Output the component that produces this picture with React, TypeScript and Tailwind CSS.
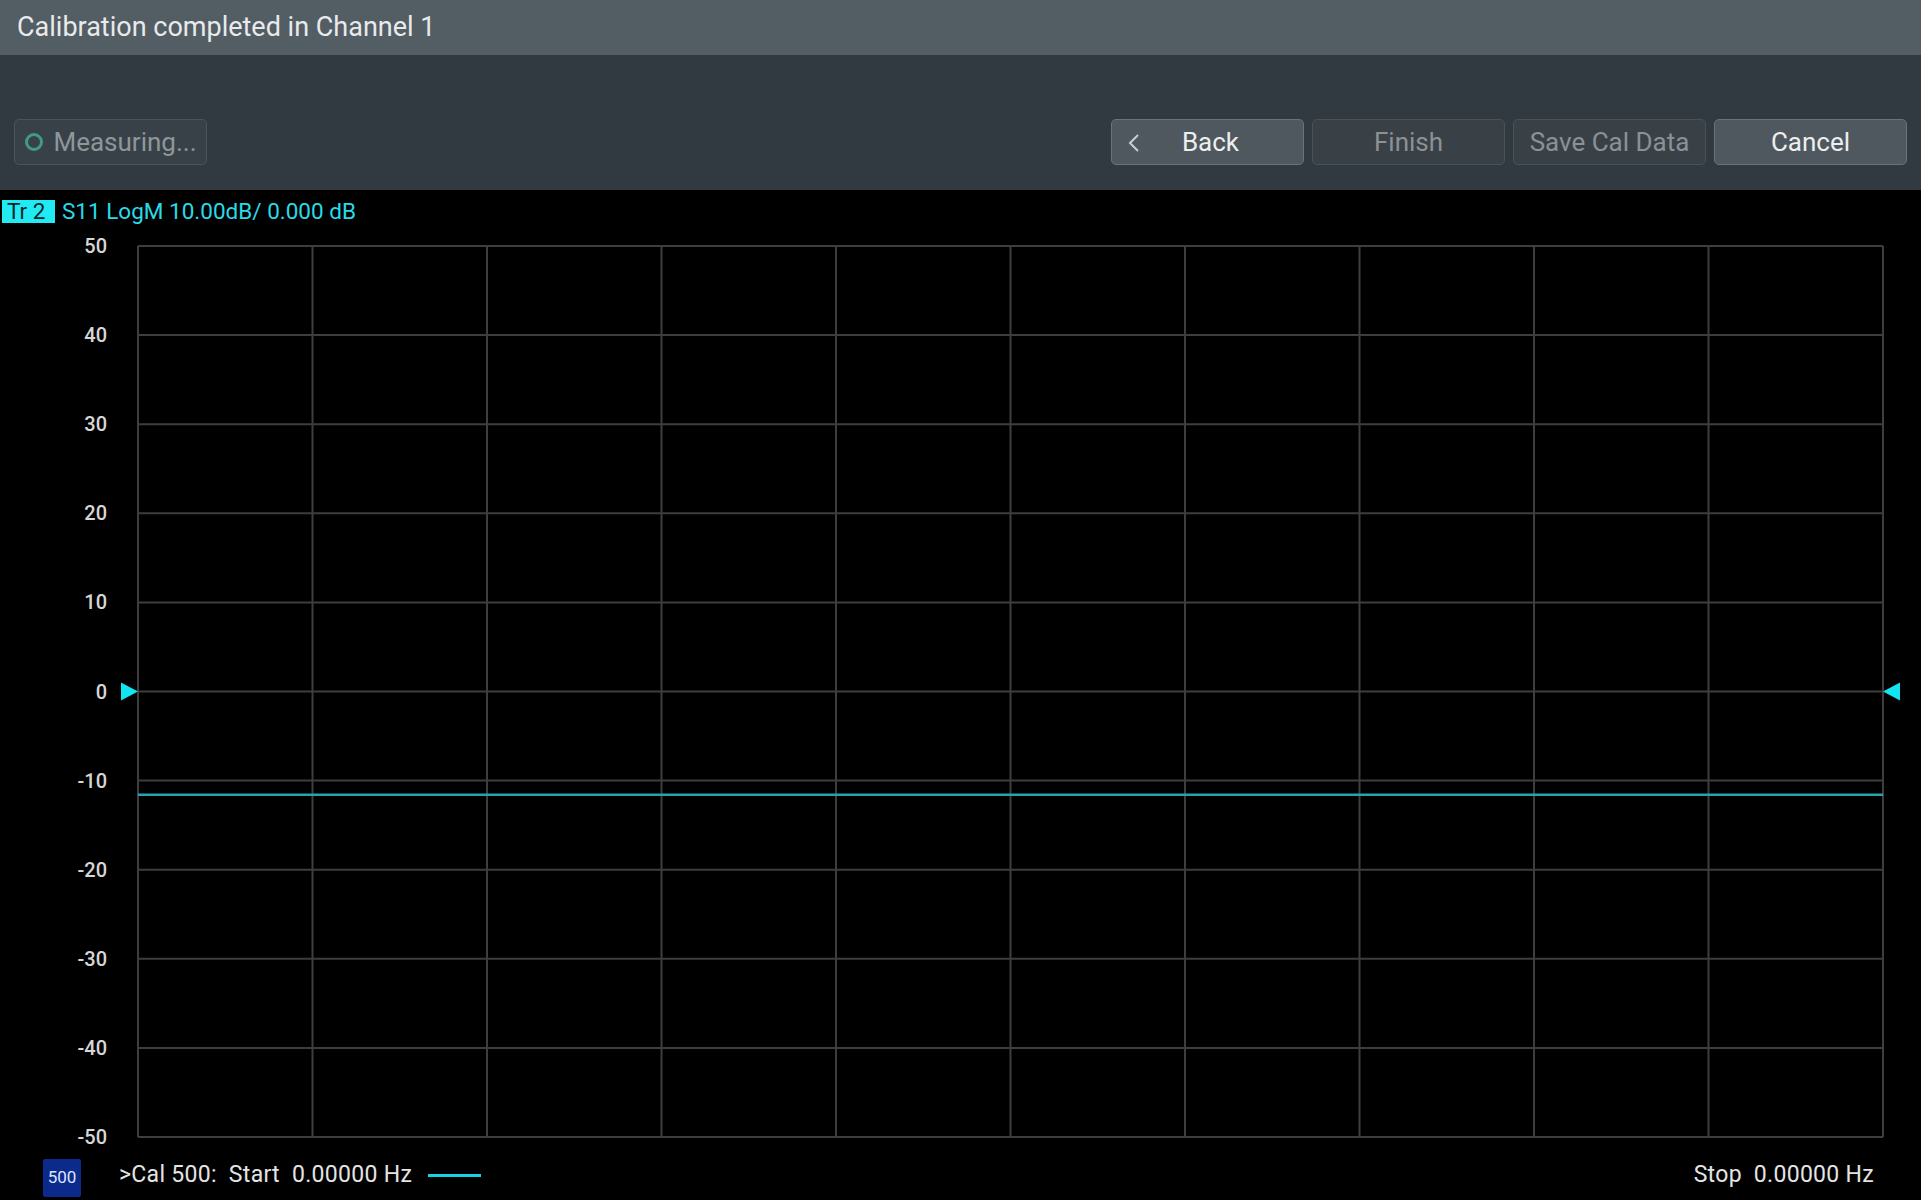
import React from "react";

const W = 1921;
const GX0 = 138;
const GX1 = 1883;
const GY0 = 16;
const GY1 = 907;
const LABELS = [50, 40, 30, 20, 10, 0, -10, -20, -30, -40, -50];

function Chart() {
  const dx = (GX1 - GX0) / 10;
  const dy = (GY1 - GY0) / 10;
  const zeroY = GY0 + 5 * dy;
  const traceY = zeroY + 1.16 * dy;

  return (
    <svg width={W} height={920} className="block">
      {/* grid */}
      {Array.from({ length: 11 }).map((_, i) => (
        <line key={"v" + i} x1={GX0 + i * dx} x2={GX0 + i * dx} y1={GY0} y2={GY1} stroke="#3e3e3e" strokeWidth={2} />
      ))}
      {Array.from({ length: 11 }).map((_, i) => (
        <line key={"h" + i} x1={GX0} x2={GX1} y1={GY0 + i * dy} y2={GY0 + i * dy} stroke="#3e3e3e" strokeWidth={2} />
      ))}

      {/* y axis labels */}
      {LABELS.map((v, i) => (
        <text
          key={v}
          x={107}
          y={GY0 + i * dy}
          textAnchor="end"
          dominantBaseline="central"
          fill="#d6d6d6"
          fontSize={20}
          fontWeight={500}
          fontFamily="Roboto, 'Noto Sans', sans-serif"
        >
          {v}
        </text>
      ))}

      {/* trace */}
      <line x1={GX0} x2={GX1} y1={traceY} y2={traceY} stroke="#27a3ae" strokeWidth={2.5} />

      {/* reference markers */}
      <polygon points={`121,${zeroY - 9} 138,${zeroY} 121,${zeroY + 9}`} fill="#12e4f2" />
      <polygon points={`1900,${zeroY - 9} 1883,${zeroY} 1900,${zeroY + 9}`} fill="#12e4f2" />
    </svg>
  );
}

function ToolButton({
  children,
  disabled = false,
  back = false,
}: {
  children: React.ReactNode;
  disabled?: boolean;
  back?: boolean;
}) {
  return (
    <button
      className={`relative w-[193px] h-[46px] rounded-[5px] border flex items-center justify-center text-[26px] ${
        disabled
          ? "bg-[#394147] border-[#4a5258] text-[#8b9196]"
          : "bg-[#4f585e] border-[#6b7378] text-[#eceeef]"
      }`}
    >
      {back && (
        <svg width="12" height="18" viewBox="0 0 12 18" className="absolute left-[16px] top-[14px]">
          <polyline points="10,1 2,9 10,17" fill="none" stroke="#c9cdd0" strokeWidth="2" />
        </svg>
      )}
      <span className={back ? "ml-[6px]" : ""}>{children}</span>
    </button>
  );
}

export default function App() {
  return (
    <div className="w-[1921px] h-[1200px] flex flex-col bg-black overflow-hidden font-['Roboto','Noto_Sans',sans-serif]">
      {/* Title bar */}
      <div className="h-[55px] shrink-0 bg-[#535d64] flex items-center px-[17px] text-[27px] text-[#e8eaeb]">
        Calibration completed in Channel 1
      </div>

      {/* Toolbar */}
      <div className="h-[135px] shrink-0 bg-[#323a41] flex items-end pb-[25px] pl-[14px] pr-[14px]">
        <div className="w-[193px] h-[46px] rounded-[5px] border border-[#4c545a] bg-[#394148] flex items-center justify-center gap-[9px] text-[26px] text-[#8f969a]">
          <svg width="20" height="20" viewBox="0 0 20 20">
            <circle cx="10" cy="10" r="7.5" fill="none" stroke="#3f9a86" strokeWidth="3" />
          </svg>
          <span>Measuring...</span>
        </div>
        <div className="flex-1" />
        <div className="flex gap-[8px]">
          <ToolButton back>Back</ToolButton>
          <ToolButton disabled>Finish</ToolButton>
          <ToolButton disabled>Save Cal Data</ToolButton>
          <ToolButton>Cancel</ToolButton>
        </div>
      </div>

      {/* Chart area */}
      <div className="flex-1 flex flex-col">
        <div className="h-[40px] shrink-0 flex items-start pt-[10px] pl-[2px] gap-[7px] text-[22.5px] leading-[23px]">
          <span className="bg-[#22eaf2] text-[#06262a] px-[5px] h-[23px] w-[53px]">Tr 2</span>
          <span className="text-[#28dbe8]">S11 LogM 10.00dB/ 0.000 dB</span>
        </div>

        <Chart />

        <div className="flex-1 flex items-center pl-[43px] pr-[47px] text-[23px] tracking-[0.3px] text-[#e4e4e4]">
          <div className="w-[38px] h-[38px] mt-[6px] rounded-[2px] bg-[#0b2a8c] flex items-center justify-center text-[17px] tracking-normal text-[#dfe6ff]">
            500
          </div>
          <span className="ml-[38px] whitespace-pre">{">Cal 500:  Start  0.00000 Hz"}</span>
          <div className="ml-[16px] w-[53px] h-[3px] bg-[#18d2e4]" />
          <div className="flex-1" />
          <span className="whitespace-pre">{"Stop  0.00000 Hz"}</span>
        </div>
      </div>
    </div>
  );
}
